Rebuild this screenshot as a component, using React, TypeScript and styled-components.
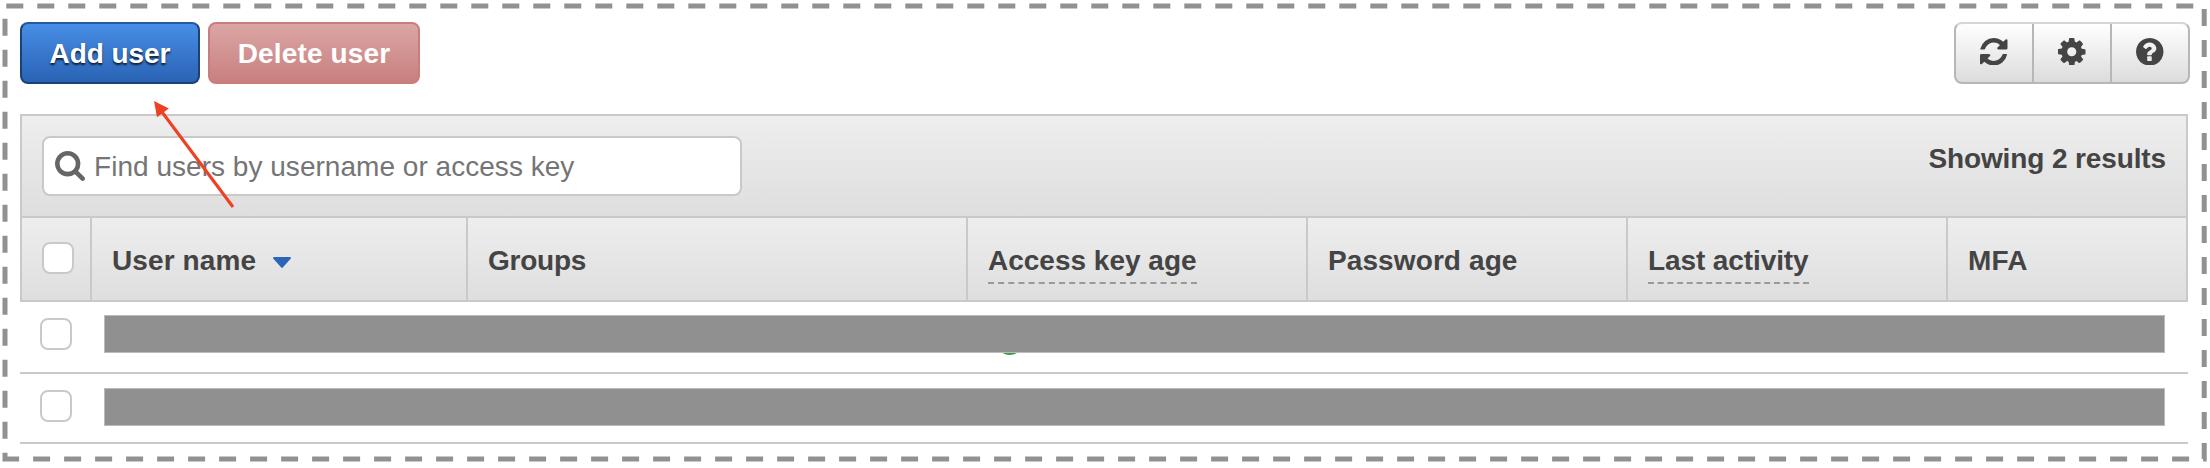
import React from 'react';
import styled, { createGlobalStyle } from 'styled-components';

const GlobalStyle = createGlobalStyle`
  *, *::before, *::after { box-sizing: border-box; }
  body {
    margin: 0;
    background: #fff;
    color: #444;
    font-family: "Liberation Sans", Arial, sans-serif;
    font-size: 28px;
    line-height: 32px;
  }
`;

const Page = styled.main`
  position: relative;
  width: 2210px;
  height: 468px;
  padding: 22px 20px 0;
  overflow: hidden;
`;

const Overlay = styled.svg`
  position: absolute;
  inset: 0;
  pointer-events: none;
`;

const Toolbar = styled.div`
  display: flex;
  justify-content: space-between;
  height: 62px;
`;

const Actions = styled.div`
  display: flex;
  gap: 8px;
`;

const ActionButton = styled.button<{ $kind: 'primary' | 'danger' }>`
  width: ${p => (p.$kind === 'primary' ? 180 : 212)}px;
  height: 62px;
  padding: 1px 0 0;
  border: 2px solid ${p => (p.$kind === 'primary' ? '#1c4274' : '#c97e7d')};
  border-top-color: ${p => (p.$kind === 'primary' ? '#25599f' : '#c97e7d')};
  border-radius: 8px;
  background: ${p =>
    p.$kind === 'primary'
      ? 'linear-gradient(#478ee6, #2a63b4)'
      : 'linear-gradient(#daa6a5, #c8807e)'};
  color: #fff;
  font: bold 28px/32px "Liberation Sans", Arial, sans-serif;
  letter-spacing: ${p => (p.$kind === 'primary' ? -0.05 : 0.15)}px;
  text-shadow: ${p => (p.$kind === 'primary' ? '0 2px 2px rgba(0, 0, 0, 0.75)' : 'none')};
`;

const IconGroup = styled.div`
  display: flex;
  width: 236px;
  height: 62px;
  border: 2px solid #b7b7b7;
  border-top-color: #d6d6d6;
  border-radius: 8px;
  background: linear-gradient(#fff, #dcdcdc);
`;

const IconButton = styled.button`
  display: flex;
  flex: 1 1 0;
  align-items: center;
  justify-content: center;
  padding: 0 0 3px;
  border: 0;
  background: none;
  color: #444;

  & + & {
    flex: 0 0 78px;
    border-left: 2px solid #b7b7b7;
  }
`;

const UserTable = styled.section`
  width: 2168px;
  margin-top: 30px;
`;

const SearchBar = styled.div`
  display: flex;
  justify-content: space-between;
  height: 104px;
  padding: 20px 20px 0;
  border: 2px solid #c9c9c9;
  background: linear-gradient(#eee, #dedede);
`;

const SearchField = styled.label`
  display: flex;
  align-items: center;
  gap: 9px;
  width: 700px;
  height: 60px;
  padding-left: 11px;
  border: 2px solid #c9c9c9;
  border-radius: 8px;
  background: #fff;
  color: #666;
`;

const Placeholder = styled.span`
  padding-top: 2px;
  color: #757575;
  letter-spacing: 0.03px;
  white-space: nowrap;
`;

const ResultCount = styled.strong`
  padding-top: 7px;
  letter-spacing: -0.12px;
`;

const HeaderRow = styled.div`
  display: grid;
  grid-template-columns: 70px 376px 500px 340px 320px 320px 238px;
  height: 84px;
  border: 2px solid #c9c9c9;
  border-top: 0;
  background: linear-gradient(#eee, #dedede);
`;

const HeaderCell = styled.div`
  display: flex;
  align-items: flex-start;
  padding: 27px 0 0 20px;
  border-right: 2px solid #c9c9c9;
  font-weight: bold;
  white-space: nowrap;

  &:first-child { padding-top: 24px; }
  &:last-child { border-right: 0; }
`;

const Label = styled.span<{ $hint?: boolean; $spacing?: number }>`
  height: ${p => (p.$hint ? 39 : 32)}px;
  border-bottom: ${p => (p.$hint ? '2px dashed #999' : '0')};
  letter-spacing: ${p => p.$spacing ?? 0}px;
`;

const SortCaret = styled.svg`
  margin: 12px 0 0 17px;
`;

const Checkbox = styled.span`
  flex: none;
  width: 32px;
  height: 32px;
  border: 2px solid #c9c9c9;
  border-radius: 8px;
  background: #fff;
`;

const UserRow = styled.div<{ $height: number }>`
  display: flex;
  align-items: flex-start;
  gap: 32px;
  height: ${p => p.$height}px;
  padding: 16px 0 0 20px;
  border-bottom: 2px solid #c9c9c9;
`;

const Redacted = styled.div<{ $shift: number }>`
  position: relative;
  width: 2061px;
  height: 38px;
  margin-top: ${p => p.$shift}px;
  border: 1px solid #bbb;
  background: #909090;
`;

const StatusDot = styled.span`
  position: absolute;
  z-index: -1;
  left: 891px;
  top: 11px;
  width: 28px;
  height: 28px;
  border-radius: 50%;
  background: #3f9a47;
`;

const icons = {
  refresh:
    'M1511 1056q0 5-1 7-64 268-268 434.5t-478 166.5q-146 0-282.5-55t-243.5-157l-129 129q-19 19-45 19t-45-19-19-45v-448q0-26 19-45t45-19h448q26 0 45 19t19 45-19 45l-137 137q71 66 161 102t187 36q134 0 250-65t186-179q11-17 53-117 8-23 30-23h192q13 0 22.5 9.5t9.5 22.5zm25-800v448q0 26-19 45t-45 19h-448q-26 0-45-19t-19-45 19-45l138-138q-148-137-349-137-134 0-250 65t-186 179q-11 17-53 117-8 23-30 23h-199q-13 0-22.5-9.5t-9.5-22.5v-7q65-268 270-434.5t480-166.5q146 0 284 55.5t245 156.5l130-129q19-19 45-19t45 19 19 45z',
  cog:
    'M1024 896q0-106-75-181t-181-75-181 75-75 181 75 181 181 75 181-75 75-181zm512-109v222q0 12-8 23t-20 13l-185 28q-19 54-39 91 35 50 107 138 10 12 10 25t-9 23q-27 37-99 108t-94 71q-12 0-26-9l-138-108q-44 23-91 38-16 136-29 186-7 28-36 28h-222q-14 0-24.5-8.5t-11.5-21.5l-28-184q-49-16-90-37l-141 107q-10 9-25 9-14 0-25-11-126-114-165-168-7-10-7-23 0-12 8-23 15-21 51-66.5t54-70.5q-27-50-41-99l-183-27q-13-2-21-12.5t-8-23.5v-222q0-12 8-23t19-13l186-28q14-46 39-92-40-57-107-138-10-12-10-24 0-10 9-23 26-36 98.5-107.5t94.5-71.5q13 0 26 10l138 107q44-23 91-38 16-136 29-186 7-28 36-28h222q14 0 24.5 8.5t11.5 21.5l28 184q49 16 90 37l142-107q9-9 24-9 13 0 25 10 129 119 165 170 7 8 7 22 0 12-8 23-15 21-51 66.5t-54 70.5q26 50 41 98l183 28q13 2 21 12.5t8 23.5z',
  help:
    'M880 1376v-192q0-14-9-23t-23-9h-192q-14 0-23 9t-9 23v192q0 14 9 23t23 9h192q14 0 23-9t9-23zm256-672q0-88-55.5-163t-138.5-116-170-41q-243 0-371 213-15 24 8 42l132 100q7 6 19 6 16 0 25-12 53-68 86-92 34-24 86-24 48 0 85.5 26t37.5 59q0 38-20 61t-68 45q-63 28-115.5 86.5t-52.5 125.5v36q0 14 9 23t23 9h192q14 0 23-9t9-23q0-19 21.5-49.5t54.5-49.5q32-18 49-28.5t46-35 44.5-48 28-60.5 12.5-81zm400 192q0 209-103 385.5t-279.5 279.5-385.5 103-385.5-103-279.5-279.5-103-385.5 103-385.5 279.5-279.5 385.5-103 385.5 103 279.5 279.5 103 385.5z',
  search:
    'M1152 832q0-185-131.5-316.5t-316.5-131.5-316.5 131.5-131.5 316.5 131.5 316.5 316.5 131.5 316.5-131.5 131.5-316.5zm512 832q0 52-38 90t-90 38q-54 0-90-38l-343-342q-179 124-399 124-143 0-273.5-55.5t-225-150-150-225-55.5-273.5 55.5-273.5 150-225 225-150 273.5-55.5 273.5 55.5 225 150 150 225 55.5 273.5q0 220-124 399l343 343q37 37 37 90z',
};

function Icon({ name, size = 27.5 }: { name: keyof typeof icons; size?: number }) {
  const span = name === 'search' ? 1664 : 1536;
  return (
    <svg width={size} height={size} viewBox={`0 128 ${span} ${span}`} fill="currentColor">
      <path d={icons[name]} />
    </svg>
  );
}

const columns = [
  { title: 'Groups', spacing: -0.25 },
  { title: 'Access key age', hint: true },
  { title: 'Password age', spacing: 0.1 },
  { title: 'Last activity', hint: true, spacing: -0.1 },
  { title: 'MFA', spacing: 0.2 },
];

export default function App() {
  return (
    <Page>
      <GlobalStyle />
      <Toolbar>
        <Actions>
          <ActionButton $kind="primary">Add user</ActionButton>
          <ActionButton $kind="danger">Delete user</ActionButton>
        </Actions>
        <IconGroup>
          <IconButton aria-label="Refresh"><Icon name="refresh" /></IconButton>
          <IconButton aria-label="Settings"><Icon name="cog" /></IconButton>
          <IconButton aria-label="Help"><Icon name="help" /></IconButton>
        </IconGroup>
      </Toolbar>

      <UserTable>
        <SearchBar>
          <SearchField>
            <Icon name="search" size={30} />
            <Placeholder>Find users by username or access key</Placeholder>
          </SearchField>
          <ResultCount>Showing 2 results</ResultCount>
        </SearchBar>
        <HeaderRow>
          <HeaderCell><Checkbox /></HeaderCell>
          <HeaderCell>
            <Label $spacing={0.1}>User name</Label>
            <SortCaret width="18" height="11" viewBox="0 0 18 11" fill="#2a65b8">
              <path d="M1 0H17Q18.6 .6 17.6 1.8L10 10.2Q9 11.4 8 10.2L.4 1.8Q-.6 .6 1 0Z" />
            </SortCaret>
          </HeaderCell>
          {columns.map(c => (
            <HeaderCell key={c.title}>
              <Label $hint={c.hint} $spacing={c.spacing}>{c.title}</Label>
            </HeaderCell>
          ))}
        </HeaderRow>
        <UserRow $height={72}>
          <Checkbox />
          <Redacted $shift={-3}><StatusDot /></Redacted>
        </UserRow>
        <UserRow $height={70}>
          <Checkbox />
          <Redacted $shift={-2} />
        </UserRow>
      </UserTable>

      <Overlay width="2210" height="468" viewBox="0 0 2210 468" fill="none">
        <path
          d="M5 459V6H2204.2V459Z"
          stroke="#919191"
          strokeWidth="5"
          strokeDasharray="17 14"
          strokeDashoffset="10.7"
        />
        <path d="M233 207L162 112" stroke="#ee4123" strokeWidth="3.1" />
        <path d="M154 101L168.8 108.6L157 117.3Z" fill="#ee4123" />
      </Overlay>
    </Page>
  );
}
